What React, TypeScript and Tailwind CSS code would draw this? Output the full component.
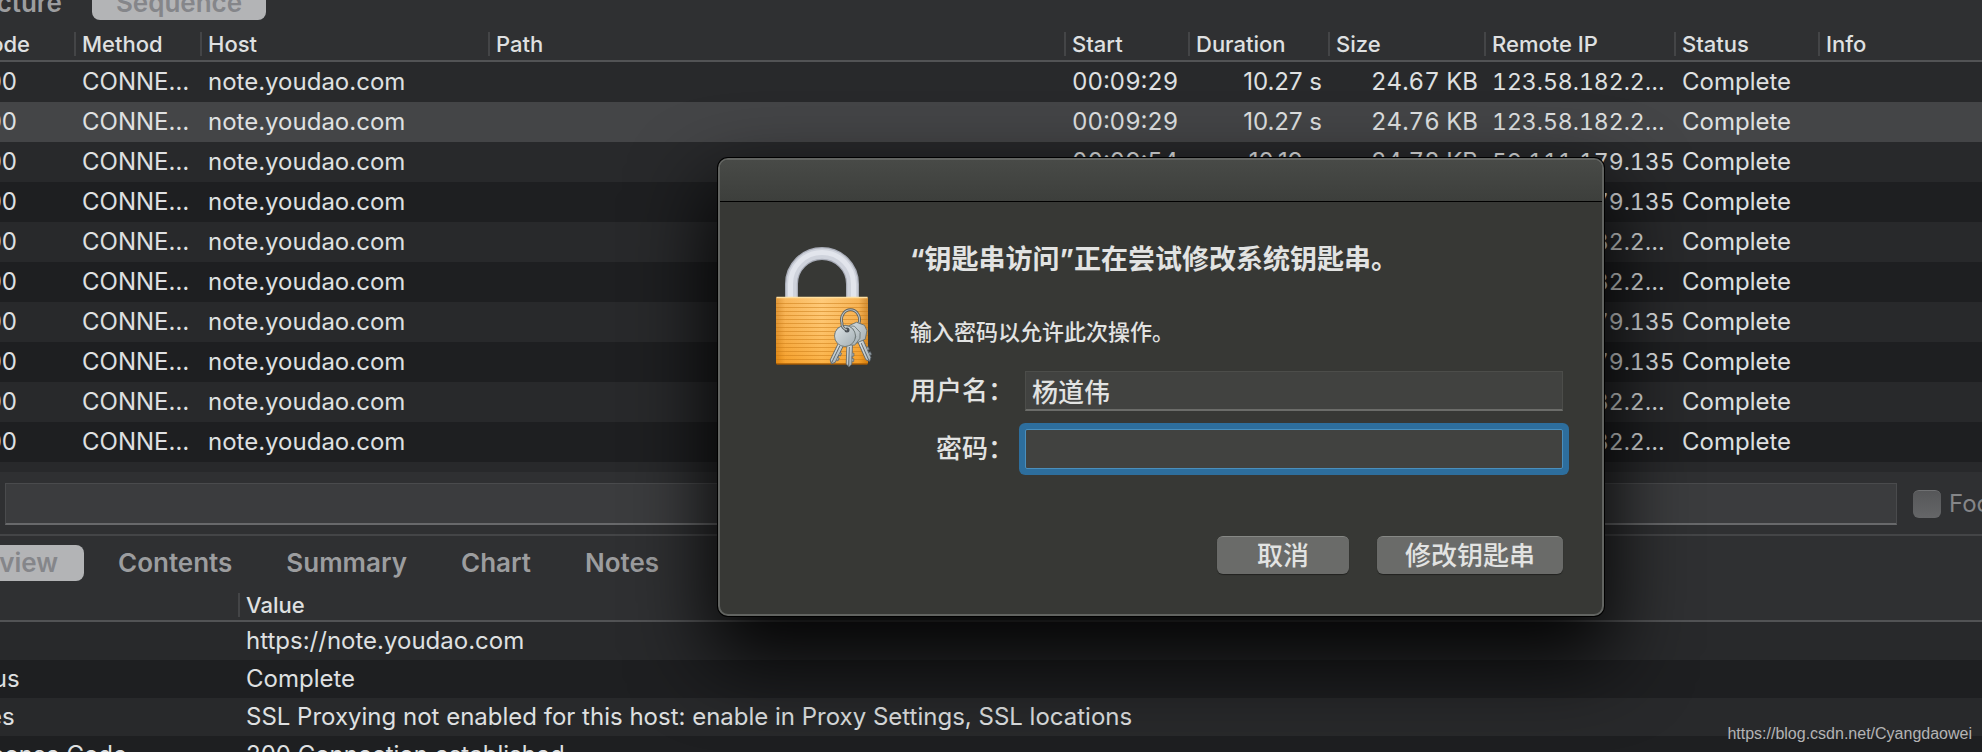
const COLS = ["Code", "Method", "Host", "Path", "Start", "Duration", "Size", "Remote IP", "Status", "Info"];

const YOUDAO = "123.58.182.2…";
const OTHER = "59.111.179.135";

const ROWS = [
  { start: "00:09:29", duration: "10.27 s", size: "24.67 KB", ip: YOUDAO },
  { start: "00:09:29", duration: "10.27 s", size: "24.76 KB", ip: YOUDAO },
  { start: "00:09:54", duration: "10.19 s", size: "24.78 KB", ip: OTHER },
  { start: "00:09:54", duration: "10.19 s", size: "24.78 KB", ip: OTHER },
  { start: "00:10:12", duration: "10.24 s", size: "24.76 KB", ip: YOUDAO },
  { start: "00:10:12", duration: "10.24 s", size: "24.76 KB", ip: YOUDAO },
  { start: "00:10:30", duration: "10.21 s", size: "24.78 KB", ip: OTHER },
  { start: "00:10:30", duration: "10.21 s", size: "24.78 KB", ip: OTHER },
  { start: "00:10:48", duration: "10.25 s", size: "24.76 KB", ip: YOUDAO },
  { start: "00:10:48", duration: "10.25 s", size: "24.76 KB", ip: YOUDAO },
];

const DETAILS = [
  { name: "URL", value: "https://note.youdao.com" },
  { name: "Status", value: "Complete" },
  { name: "Notes", value: "SSL Proxying not enabled for this host: enable in Proxy Settings, SSL locations" },
  { name: "Response Code", value: "200 Connection established" },
];

const TABS = ["Contents", "Summary", "Chart", "Notes"];

function HeaderCell({ label, className = "border-[#444547] pl-1.5" }: { label: string; className?: string }) {
  return (
    <th scope="col" className="border-b-2 border-[#525355] p-0 text-left font-medium">
      <div className={`h-6 truncate border-l-2 text-[22px] leading-6 ${className}`}>{label}</div>
    </th>
  );
}

function Key({ turn }: { turn: number }) {
  return (
    <g transform={`rotate(${turn})`}>
      <path d="M-2.800 8h5.600v20l-2.800 3-2.800-3z" fill="url(#steel)" stroke="#59626a" strokeWidth=".8" />
      <path d="M2.800 17h1.800v3h-1.800v2.500h1.800v3h-1.800" fill="#9aa3a8" stroke="#59626a" strokeWidth=".6" />
      <path d="M-.300 11v19" stroke="#5b646b" strokeWidth=".9" />
      <path d="M-4 -10h8l6 6v6l-5 7h-10l-5 -7v-6z" fill="url(#steel)" stroke="#66706f" strokeWidth=".8" strokeLinejoin="round" />
    </g>
  );
}

function LockIcon() {
  return (
    <svg viewBox="0 -3 100 129" className="h-[129px] w-[100px] shrink-0" aria-hidden="true">
      <defs>
        <linearGradient id="brass" x1="0" x2="1" y1="0" y2="0">
          <stop offset="0" stopColor="#d98416" />
          <stop offset=".1" stopColor="#f7a93c" />
          <stop offset=".5" stopColor="#ffc263" />
          <stop offset=".9" stopColor="#f5a638" />
          <stop offset="1" stopColor="#c9780f" />
        </linearGradient>
        <linearGradient id="sheen" x1="0" x2="0" y1="0" y2="1">
          <stop offset="0" stopColor="#fff" stopOpacity=".15" />
          <stop offset="1" stopColor="#f08a00" stopOpacity=".3" />
        </linearGradient>
        <pattern id="grooves" width="8" height="4" patternUnits="userSpaceOnUse">
          <rect width="8" height="1" fill="#c97a14" opacity=".5" />
        </pattern>
        <linearGradient id="steel" x1="0" x2="1" y1="0" y2="1">
          <stop offset="0" stopColor="#dde4e6" />
          <stop offset="1" stopColor="#a3aeb3" />
        </linearGradient>
      </defs>
      <path d="M17.500 50V37a30.500 30.500 0 0 1 61 0v13" fill="none" stroke="#a9adb8" strokeWidth="13" />
      <path d="M17.500 50V37a30.500 30.500 0 0 1 61 0v13" fill="none" stroke="#cfd3dc" strokeWidth="10.500" />
      <path d="M16.500 50V37a31.500 31.500 0 0 1 63 0v13" fill="none" stroke="#e2e5ec" strokeWidth="5" />
      <rect x="2" y="51" width="92" height="67" rx="2" fill="#24211c" opacity=".6" />
      <rect x="2" y="50" width="92" height="67" rx="1.500" fill="url(#brass)" />
      <rect x="2" y="50" width="92" height="67" rx="1.500" fill="url(#sheen)" />
      <rect x="2" y="53" width="92" height="63" fill="url(#grooves)" />
      <path d="M2.500 50.500h91" stroke="#ffe0a0" strokeWidth="1.500" />
      <path d="M2.500 117h91" stroke="#a85f08" strokeWidth="1.500" />
      <g transform="translate(83 86)"><Key turn={-24} /></g>
      <g transform="translate(76 89)"><Key turn={2} /></g>
      <g transform="translate(71 89)">
        <Key turn={26} />
        <circle r="10.500" fill="url(#steel)" stroke="#66706f" strokeWidth=".8" />
        <circle cx="2" cy="-6" r="2.500" fill="#4a5055" />
      </g>
      <path d="M68 76a9 10 0 1 1 17 0M68 75q-1 6 5 8" fill="none" stroke="#565c5e" strokeWidth="2.800" />
      <path d="M68 76a9 10 0 1 1 17 0M68 75q-1 6 5 8" fill="none" stroke="#b9c0c1" strokeWidth="1.100" />
    </svg>
  );
}

function AuthDialog() {
  return (
    <form
      role="dialog"
      aria-labelledby="auth-title"
      className="absolute left-[718px] top-[158px] w-[886px] overflow-hidden rounded-[10px] border-2 border-[#626461] bg-[#373835] font-[Inter,'Noto_Sans_CJK_SC',sans-serif] font-medium text-[#e2e3e2] shadow-[0_0_0_1px_#000,0_36px_80px_8px_rgba(0,0,0,0.9)]"
    >
      <div className="h-[42px] border-b border-black bg-linear-to-b from-[#484a47] to-[#3d3f3c]" />
      <div className="flex pb-10 pl-[54px] pr-[39px] pt-[42px]">
        <LockIcon />
        <div className="ml-9 min-w-0 flex-1">
          <h1 id="auth-title" className="text-[27px] font-bold leading-8">“钥匙串访问”正在尝试修改系统钥匙串。</h1>
          <p className="mt-10 text-[22px] leading-8">输入密码以允许此次操作。</p>
          <div className="mt-[23px] grid grid-cols-[auto_1fr] items-center gap-x-[11px] gap-y-[18px] text-[26px]">
            <label htmlFor="user" className="text-right leading-10">用户名：</label>
            <input
              id="user"
              defaultValue="杨道伟"
              className="h-10 w-full border border-b-2 border-[#4c4d4a] border-b-[#6b6c69] bg-[#414240] px-1.5 leading-8 outline-none"
            />
            <label htmlFor="password" className="text-right leading-10">密码：</label>
            <input
              id="password"
              type="password"
              className="h-10 w-full rounded-xs border border-[#4a8fbd] bg-[#414240] px-1.5 shadow-[0_0_0_6px_#2d6e9d] outline-none"
            />
          </div>
          <div className="mt-[67px] flex justify-end gap-7 text-[26px]">
            <button type="button" className="h-[38px] w-[132px] rounded-md border-t border-[#868885] bg-[#6a6b69] leading-8 shadow-[0_1px_1px_rgba(0,0,0,0.4)]">取消</button>
            <button type="submit" className="h-[38px] w-[186px] rounded-md border-t border-[#868885] bg-[#6a6b69] leading-8 shadow-[0_1px_1px_rgba(0,0,0,0.4)]">修改钥匙串</button>
          </div>
        </div>
      </div>
    </form>
  );
}

export default function App() {
  return (
    <main className="relative h-screen overflow-hidden bg-[#2f3032] font-[Inter,sans-serif] text-[#dfe0e1]">
      <div className="-ml-20 -mr-12">
        <nav className="flex h-7 items-end pb-2 text-[26px] font-semibold text-[#9c9d9f]">
          <button type="button" className="h-[34px] w-[172px] pr-[30px] text-right leading-[34px]">Structure</button>
          <button type="button" className="h-[34px] w-[174px] rounded-lg bg-[#b3b4b6] leading-[34px] text-[#85868a]">Sequence</button>
        </nav>

        <table className="w-full table-fixed border-separate border-spacing-0 text-2xl">
          <colgroup>
            <col className="w-[154px]" />
            <col className="w-[126px]" />
            <col className="w-[288px]" />
            <col />
            <col className="w-[124px]" />
            <col className="w-[140px]" />
            <col className="w-[156px]" />
            <col className="w-[190px]" />
            <col className="w-[144px]" />
            <col className="w-[212px]" />
          </colgroup>
          <thead>
            <tr className="h-[34px]">
              {COLS.map((c, i) => (
                <HeaderCell key={c} label={c} className={i === 0 ? "border-transparent pl-[52px]" : undefined} />
              ))}
            </tr>
          </thead>
          <tbody>
            {ROWS.map((r, i) => (
              <tr key={i} className={`h-10 whitespace-nowrap ${i === 1 ? "bg-[#444547]" : i % 2 ? "bg-[#1e1f21]" : "bg-[#28292b]"}`}>
                <td className="p-0 pl-[52px]">200</td>
                <td className="p-0 pl-2">CONNE…</td>
                <td className="p-0 pl-2">note.youdao.com</td>
                <td />
                <td className="p-0 pl-2 tabular-nums">{r.start}</td>
                <td className="p-0 pr-1.5 text-right">{r.duration}</td>
                <td className="p-0 pr-1.5 text-right tabular-nums">{r.size}</td>
                <td className="p-0 pl-2 text-[23px] tabular-nums">{r.ip}</td>
                <td className="p-0 pl-2">Complete</td>
                <td />
              </tr>
            ))}
          </tbody>
        </table>

        <div className="h-2.5 bg-[#28292b]" />
        <div className="flex h-16 items-center border-b-2 border-[#444547] pl-[85px] pt-0.5 text-2xl">
          <input
            type="text"
            aria-label="Filter"
            className="h-[42px] min-w-0 flex-1 border border-b-2 border-[#4a4b4d] border-b-[#68696b] bg-[#3b3c3e] px-2 outline-none"
          />
          <label className="ml-4 flex w-[117px] items-center gap-2 whitespace-nowrap text-[#858688]">
            <input type="checkbox" className="size-7 shrink-0 appearance-none rounded-md border-t border-[#707173] bg-linear-to-b from-[#565759] to-[#656668]" />
            Focused
          </label>
        </div>

        <nav className="flex h-[54px] items-center text-[26px] font-semibold text-[#9c9d9f]">
          <button type="button" className="h-9 w-[164px] rounded-lg bg-[#b3b4b6] pr-[26px] text-right leading-9 text-[#85868a]">Overview</button>
          <div className="ml-[34px] flex gap-[54px]">
            {TABS.map((t) => (
              <button key={t} type="button" className="leading-9">{t}</button>
            ))}
          </div>
        </nav>

        <table className="w-full table-fixed border-separate border-spacing-0 text-2xl">
          <colgroup>
            <col className="w-[318px]" />
            <col />
          </colgroup>
          <thead>
            <tr className="h-8">
              <HeaderCell label="Name" className="border-transparent pl-1.5" />
              <HeaderCell label="Value" />
            </tr>
          </thead>
          <tbody>
            {DETAILS.map((d, i) => (
              <tr key={d.name} className={`h-[38px] whitespace-nowrap ${i % 2 ? "bg-[#1e1f21]" : "bg-[#28292b]"}`}>
                <td className="p-0 pl-7">{d.name}</td>
                <td className="p-0 pl-2">{d.value}</td>
              </tr>
            ))}
          </tbody>
        </table>
      </div>

      <AuthDialog />

      <a
        href="https://blog.csdn.net/Cyangdaowei"
        className="absolute bottom-2 right-2.5 font-['Liberation_Sans',sans-serif] text-base leading-5 text-[#b4b4b5]"
      >
        https://blog.csdn.net/Cyangdaowei
      </a>
    </main>
  );
}
